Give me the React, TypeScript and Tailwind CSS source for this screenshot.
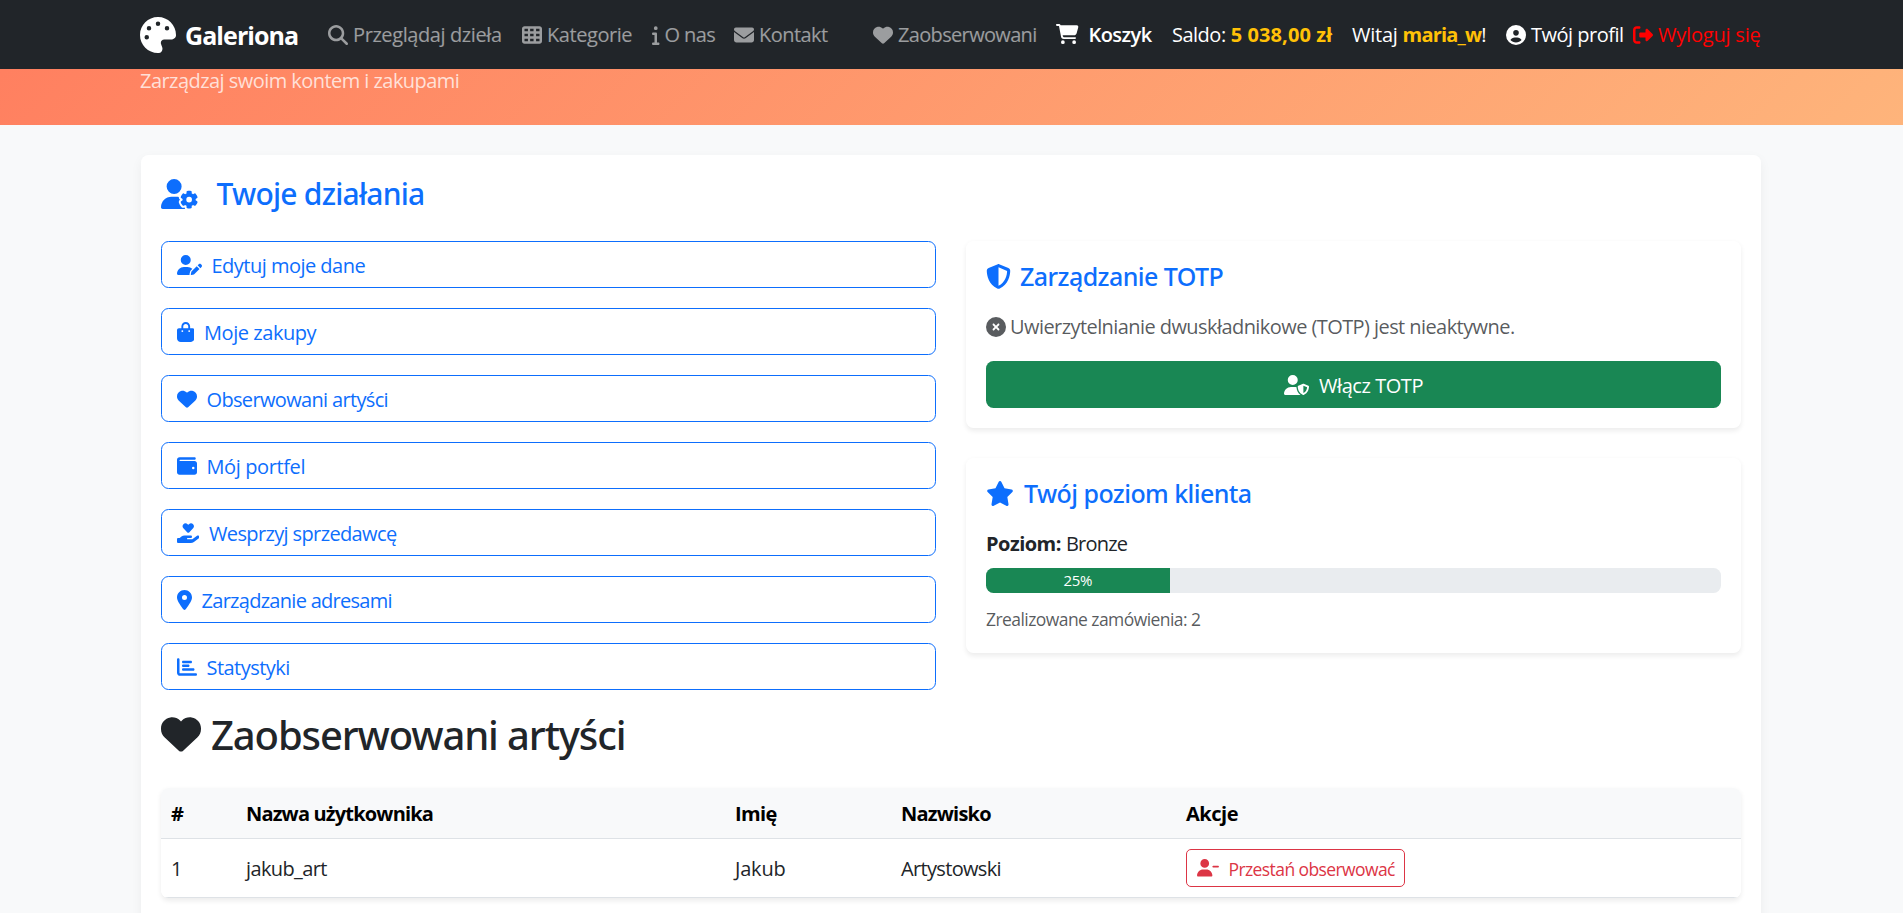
import type { ReactNode } from "react";
import type { IconType } from "react-icons";
import {
  FaBagShopping,
  FaCartShopping,
  FaChartBar,
  FaCircleUser,
  FaCircleXmark,
  FaEnvelope,
  FaHandHoldingHeart,
  FaHeart,
  FaInfo,
  FaLocationDot,
  FaMagnifyingGlass,
  FaPalette,
  FaRightFromBracket,
  FaShieldHalved,
  FaStar,
  FaTableCells,
  FaUserGear,
  FaUserMinus,
  FaUserPen,
  FaUserShield,
  FaWallet,
} from "react-icons/fa6";

type Entry = { icon: IconType; iconWidth: string; label: string; tracking: string; width?: string };

const navLinks: Entry[] = [
  { icon: FaMagnifyingGlass, iconWidth: "w-5", label: "Przeglądaj dzieła", tracking: "tracking-[-0.0202em]", width: "w-[194px]" },
  { icon: FaTableCells, iconWidth: "w-5", label: "Kategorie", tracking: "tracking-[-0.022em]", width: "w-[130px]" },
  { icon: FaInfo, iconWidth: "w-[7.5px]", label: "O nas", tracking: "tracking-[-0.03em]", width: "w-[82px]" },
  { icon: FaEnvelope, iconWidth: "w-5", label: "Kontakt", tracking: "tracking-[-0.0273em]", width: "w-[139px]" },
  { icon: FaHeart, iconWidth: "w-5", label: "Zaobserwowani", tracking: "tracking-[-0.0331em]", width: "w-[183px]" },
];

const actions: Entry[] = [
  { icon: FaUserPen, iconWidth: "w-[25px]", label: "Edytuj moje dane", tracking: "tracking-[-0.0257em]" },
  { icon: FaBagShopping, iconWidth: "w-[17.5px]", label: "Moje zakupy", tracking: "tracking-[-0.0221em]" },
  { icon: FaHeart, iconWidth: "w-5", label: "Obserwowani artyści", tracking: "tracking-[-0.033em]" },
  { icon: FaWallet, iconWidth: "w-5", label: "Mój portfel", tracking: "tracking-[-0.0193em]" },
  { icon: FaHandHoldingHeart, iconWidth: "w-[22.5px]", label: "Wesprzyj sprzedawcę", tracking: "tracking-[-0.0316em]" },
  { icon: FaLocationDot, iconWidth: "w-[15px]", label: "Zarządzanie adresami", tracking: "tracking-[-0.0356em]" },
  { icon: FaChartBar, iconWidth: "w-5", label: "Statystyki", tracking: "tracking-[-0.027em]" },
];

function Navbar() {
  return (
    <nav className="relative z-10 flex h-[69px] items-center whitespace-nowrap bg-[#212529] pl-[140px] text-white">
      <a className="flex w-[188px] shrink-0 items-center gap-[9px] text-[25px] font-bold">
        <FaPalette className="h-9 w-9" />
        <span className="tracking-[-0.037em]">Galeriona</span>
      </a>
      {navLinks.map(({ icon: Icon, iconWidth, label, tracking, width }) => (
        <a key={label} className={`flex shrink-0 items-center gap-[5px] text-white/55 ${width}`}>
          <Icon className={`h-5 ${iconWidth}`} />
          <span className={tracking}>{label}</span>
        </a>
      ))}
      <a className="flex w-[116px] shrink-0 items-center gap-2.5 font-semibold">
        <FaCartShopping className="mb-0.5 h-5 w-[22.5px]" />
        <span className="tracking-[-0.0278em]">Koszyk</span>
      </a>
      <div className="flex w-[180px] shrink-0 gap-[5px]">
        <span className="tracking-[-0.0251em]">Saldo:</span>
        <span className="font-bold tracking-[0.005em] text-[#ffc107]">5 038,00 zł</span>
      </div>
      <div className="flex w-[154px] shrink-0">
        <span className="mr-[5px] tracking-[-0.0121em]">Witaj</span>
        <span className="font-bold tracking-[-0.0409em] text-[#ffc107]">maria_w</span>
        <span>!</span>
      </div>
      <a className="flex w-[127px] shrink-0 items-center gap-[5px]">
        <FaCircleUser className="h-5 w-5" />
        <span className="tracking-[-0.0253em]">Twój profil</span>
      </a>
      <a className="flex shrink-0 items-center gap-[5px] text-[#ff0000]">
        <FaRightFromBracket className="h-5 w-5" />
        <span className="tracking-[-0.0098em]">Wyloguj się</span>
      </a>
    </nav>
  );
}

function Card({ children }: { children: ReactNode }) {
  return (
    <section className="rounded-[7.5px] bg-white p-5 shadow-[0_2.5px_5px_rgba(0,0,0,0.075)]">{children}</section>
  );
}

function TotpCard() {
  return (
    <Card>
      <h5 className="mb-5 flex h-[30px] items-center gap-[9px] font-['Noto_Sans','Open_Sans',sans-serif] text-[25px] font-medium leading-[30px] text-[#0d6efd]">
        <FaShieldHalved className="mt-px h-[25px] w-[25px]" />
        <span className="tracking-[-0.0224em]">Zarządzanie TOTP</span>
      </h5>
      <p className="mb-5 flex h-[30px] items-center gap-1 text-[#212529]/75">
        <FaCircleXmark className="mt-px h-5 w-5" />
        <span className="pt-0.5 tracking-[-0.0286em]">Uwierzytelnianie dwuskładnikowe (TOTP) jest nieaktywne.</span>
      </p>
      <button className="flex h-[47px] w-full items-center justify-center gap-2.5 rounded-[7.5px] bg-[#198754] text-white">
        <FaUserShield className="h-5 w-[25px]" />
        <span className="pt-0.5 tracking-[-0.022em]">Włącz TOTP</span>
      </button>
    </Card>
  );
}

function LevelCard() {
  return (
    <Card>
      <h5 className="mb-5 flex h-[30px] items-center gap-2.5 font-['Noto_Sans','Open_Sans',sans-serif] text-[25px] font-medium leading-[30px] text-[#0d6efd]">
        <FaStar className="mt-px h-[25px] w-[28px]" />
        <span className="tracking-[-0.0225em]">Twój poziom klienta</span>
      </h5>
      <p className="mb-2.5 flex h-[30px] gap-[5px] pt-px">
        <strong className="font-bold tracking-[-0.0259em]">Poziom:</strong>
        <span className="tracking-[-0.0387em]">Bronze</span>
      </p>
      <div className="h-[25px] overflow-hidden rounded-[7.5px] bg-[#e9ecef]">
        <div className="flex h-full w-1/4 items-center justify-center bg-[#198754] pb-px text-[15px] tracking-[-0.0181em] text-white">
          25%
        </div>
      </div>
      <p className="mt-2.5 h-[30px] pt-px text-[17.5px] tracking-[-0.0323em] text-[#212529]/75">
        Zrealizowane zamówienia: 2
      </p>
    </Card>
  );
}

function ArtistsTable() {
  return (
    <div className="overflow-hidden rounded-[7.5px] shadow-[0_2.5px_5px_rgba(0,0,0,0.075)]">
      <table className="w-full table-fixed border-separate border-spacing-0 text-left">
        <colgroup>
          <col className="w-[75px]" />
          <col className="w-[489px]" />
          <col className="w-[166px]" />
          <col className="w-[285px]" />
          <col />
        </colgroup>
        <thead>
          <tr className="h-[51px] bg-[#f8f9fa] text-black [&>th]:border-b [&>th]:border-[#dee2e6] [&>th]:px-2.5 [&>th]:pt-0.5 [&>th]:font-bold">
            <th>#</th>
            <th className="tracking-[-0.0412em]">Nazwa użytkownika</th>
            <th className="tracking-[-0.0298em]">Imię</th>
            <th className="tracking-[-0.039em]">Nazwisko</th>
            <th className="tracking-[-0.0231em]">Akcje</th>
          </tr>
        </thead>
        <tbody>
          <tr className="h-[59px] bg-white [&>td]:border-b [&>td]:border-[#dee2e6] [&>td]:px-2.5">
            <td className="pt-0.5">1</td>
            <td className="pt-0.5 tracking-[-0.0314em]">jakub_art</td>
            <td className="pt-0.5 tracking-[-0.01em]">Jakub</td>
            <td className="pt-0.5 tracking-[-0.0332em]">Artystowski</td>
            <td>
              <button className="flex h-[38px] w-[219px] items-center gap-[9.5px] whitespace-nowrap rounded-[5px] border border-[#dc3545] pl-2.5 text-[17.5px] text-[#dc3545]">
                <FaUserMinus className="h-[17.5px] w-[22px] shrink-0" />
                <span className="pt-px tracking-[-0.0337em]">Przestań obserwować</span>
              </button>
            </td>
          </tr>
        </tbody>
      </table>
    </div>
  );
}

export default function App() {
  return (
    <div className="h-[913px] overflow-hidden bg-[#f8f9fa] font-['Open_Sans','Noto_Sans',sans-serif] text-[20px] leading-[30px] text-[#212529]">
      <Navbar />
      <header className="-mt-[69px] h-[125px] bg-[linear-gradient(135deg,#ff7e5f,#feb47b)] pl-[140px] pt-[65.5px]">
        <p className="tracking-[-0.0273em] text-white/75">Zarządzaj swoim kontem i zakupami</p>
      </header>
      <main className="ml-[141px] mt-[30px] h-[800px] w-[1620px] rounded-[7.5px] bg-white p-5 shadow-[0_4px_12px_rgba(0,0,0,0.05)]">
        <h4 className="mb-[30px] flex h-9 items-center gap-[18px] font-['Noto_Sans','Open_Sans',sans-serif] text-[30px] font-medium leading-9 text-[#0d6efd]">
          <FaUserGear className="mt-0.5 h-[30px] w-[37.5px]" />
          <span className="pt-px tracking-[-0.0255em]">Twoje działania</span>
        </h4>
        <div className="grid grid-cols-2 gap-[30px]">
          <div className="flex flex-col gap-5">
            {actions.map(({ icon: Icon, iconWidth, label, tracking }) => (
              <a
                key={label}
                className="flex h-[47px] items-center gap-2.5 rounded-[7.5px] border border-[#0d6efd] px-[14.5px] text-[#0d6efd]"
              >
                <Icon className={`h-5 ${iconWidth}`} />
                <span className={`pt-0.5 ${tracking}`}>{label}</span>
              </a>
            ))}
          </div>
          <div className="flex flex-col gap-[30px]">
            <TotpCard />
            <LevelCard />
          </div>
        </div>
        <h2 className="mb-[30px] mt-5 flex h-12 items-center gap-2.5 font-['Noto_Sans','Open_Sans',sans-serif] text-[40px] font-medium leading-[48px]">
          <FaHeart className="h-10 w-10" />
          <span className="pt-px tracking-[-0.028em]">Zaobserwowani artyści</span>
        </h2>
        <ArtistsTable />
      </main>
    </div>
  );
}
